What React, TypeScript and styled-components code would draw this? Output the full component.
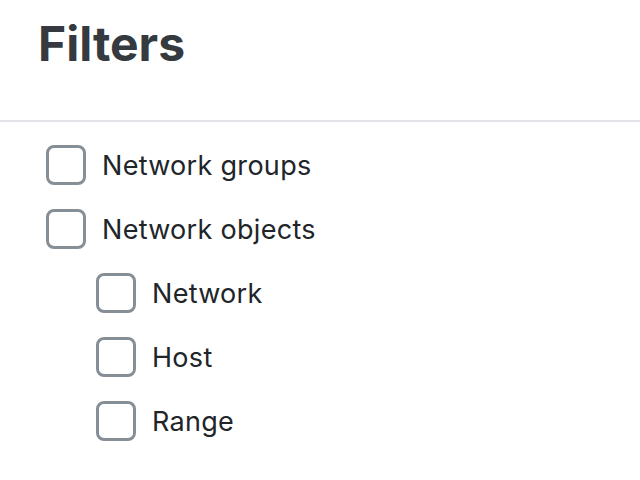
import React from "react";
import styled, { createGlobalStyle } from "styled-components";

const Global = createGlobalStyle`
  html, body { margin: 0; padding: 0; background: #ffffff; }
  body { font-family: Inter, "Noto Sans", sans-serif; }
`;

const Panel = styled.div`
  width: 640px;
  height: 480px;
  background: #ffffff;
  display: flex;
  flex-direction: column;
`;

const Header = styled.header`
  padding: 20px 38px 0;
  height: 122px;
  box-sizing: border-box;
  border-bottom: 2px solid #e3e3e8;
`;

const Title = styled.h1`
  margin: 0;
  font-size: 48px;
  line-height: 48px;
  font-weight: 700;
  color: #343a40;
  letter-spacing: 0px;
`;

const List = styled.ul`
  list-style: none;
  margin: 0;
  padding: 11px 0 0 46px;
  display: flex;
  flex-direction: column;
`;

const Row = styled.li<{ $level: number }>`
  height: 64px;
  display: flex;
  align-items: center;
  gap: 16px;
  padding-left: ${(p) => p.$level * 50}px;
`;

const Box = styled.span`
  width: 40px;
  height: 40px;
  box-sizing: border-box;
  border: 3px solid #868e96;
  border-radius: 8px;
  background: #ffffff;
  flex: none;
`;

const Label = styled.span`
  font-size: 27px;
  letter-spacing: 0.3px;
  color: #212529;
  font-weight: 400;
`;

const items = [
  { label: "Network groups", level: 0 },
  { label: "Network objects", level: 0 },
  { label: "Network", level: 1 },
  { label: "Host", level: 1 },
  { label: "Range", level: 1 },
];

export default function App() {
  return (
    <>
      <Global />
      <Panel>
        <Header>
          <Title>Filters</Title>
        </Header>
        <List>
          {items.map((it) => (
            <Row key={it.label} $level={it.level}>
              <Box role="checkbox" aria-checked="false" />
              <Label>{it.label}</Label>
            </Row>
          ))}
        </List>
      </Panel>
    </>
  );
}
